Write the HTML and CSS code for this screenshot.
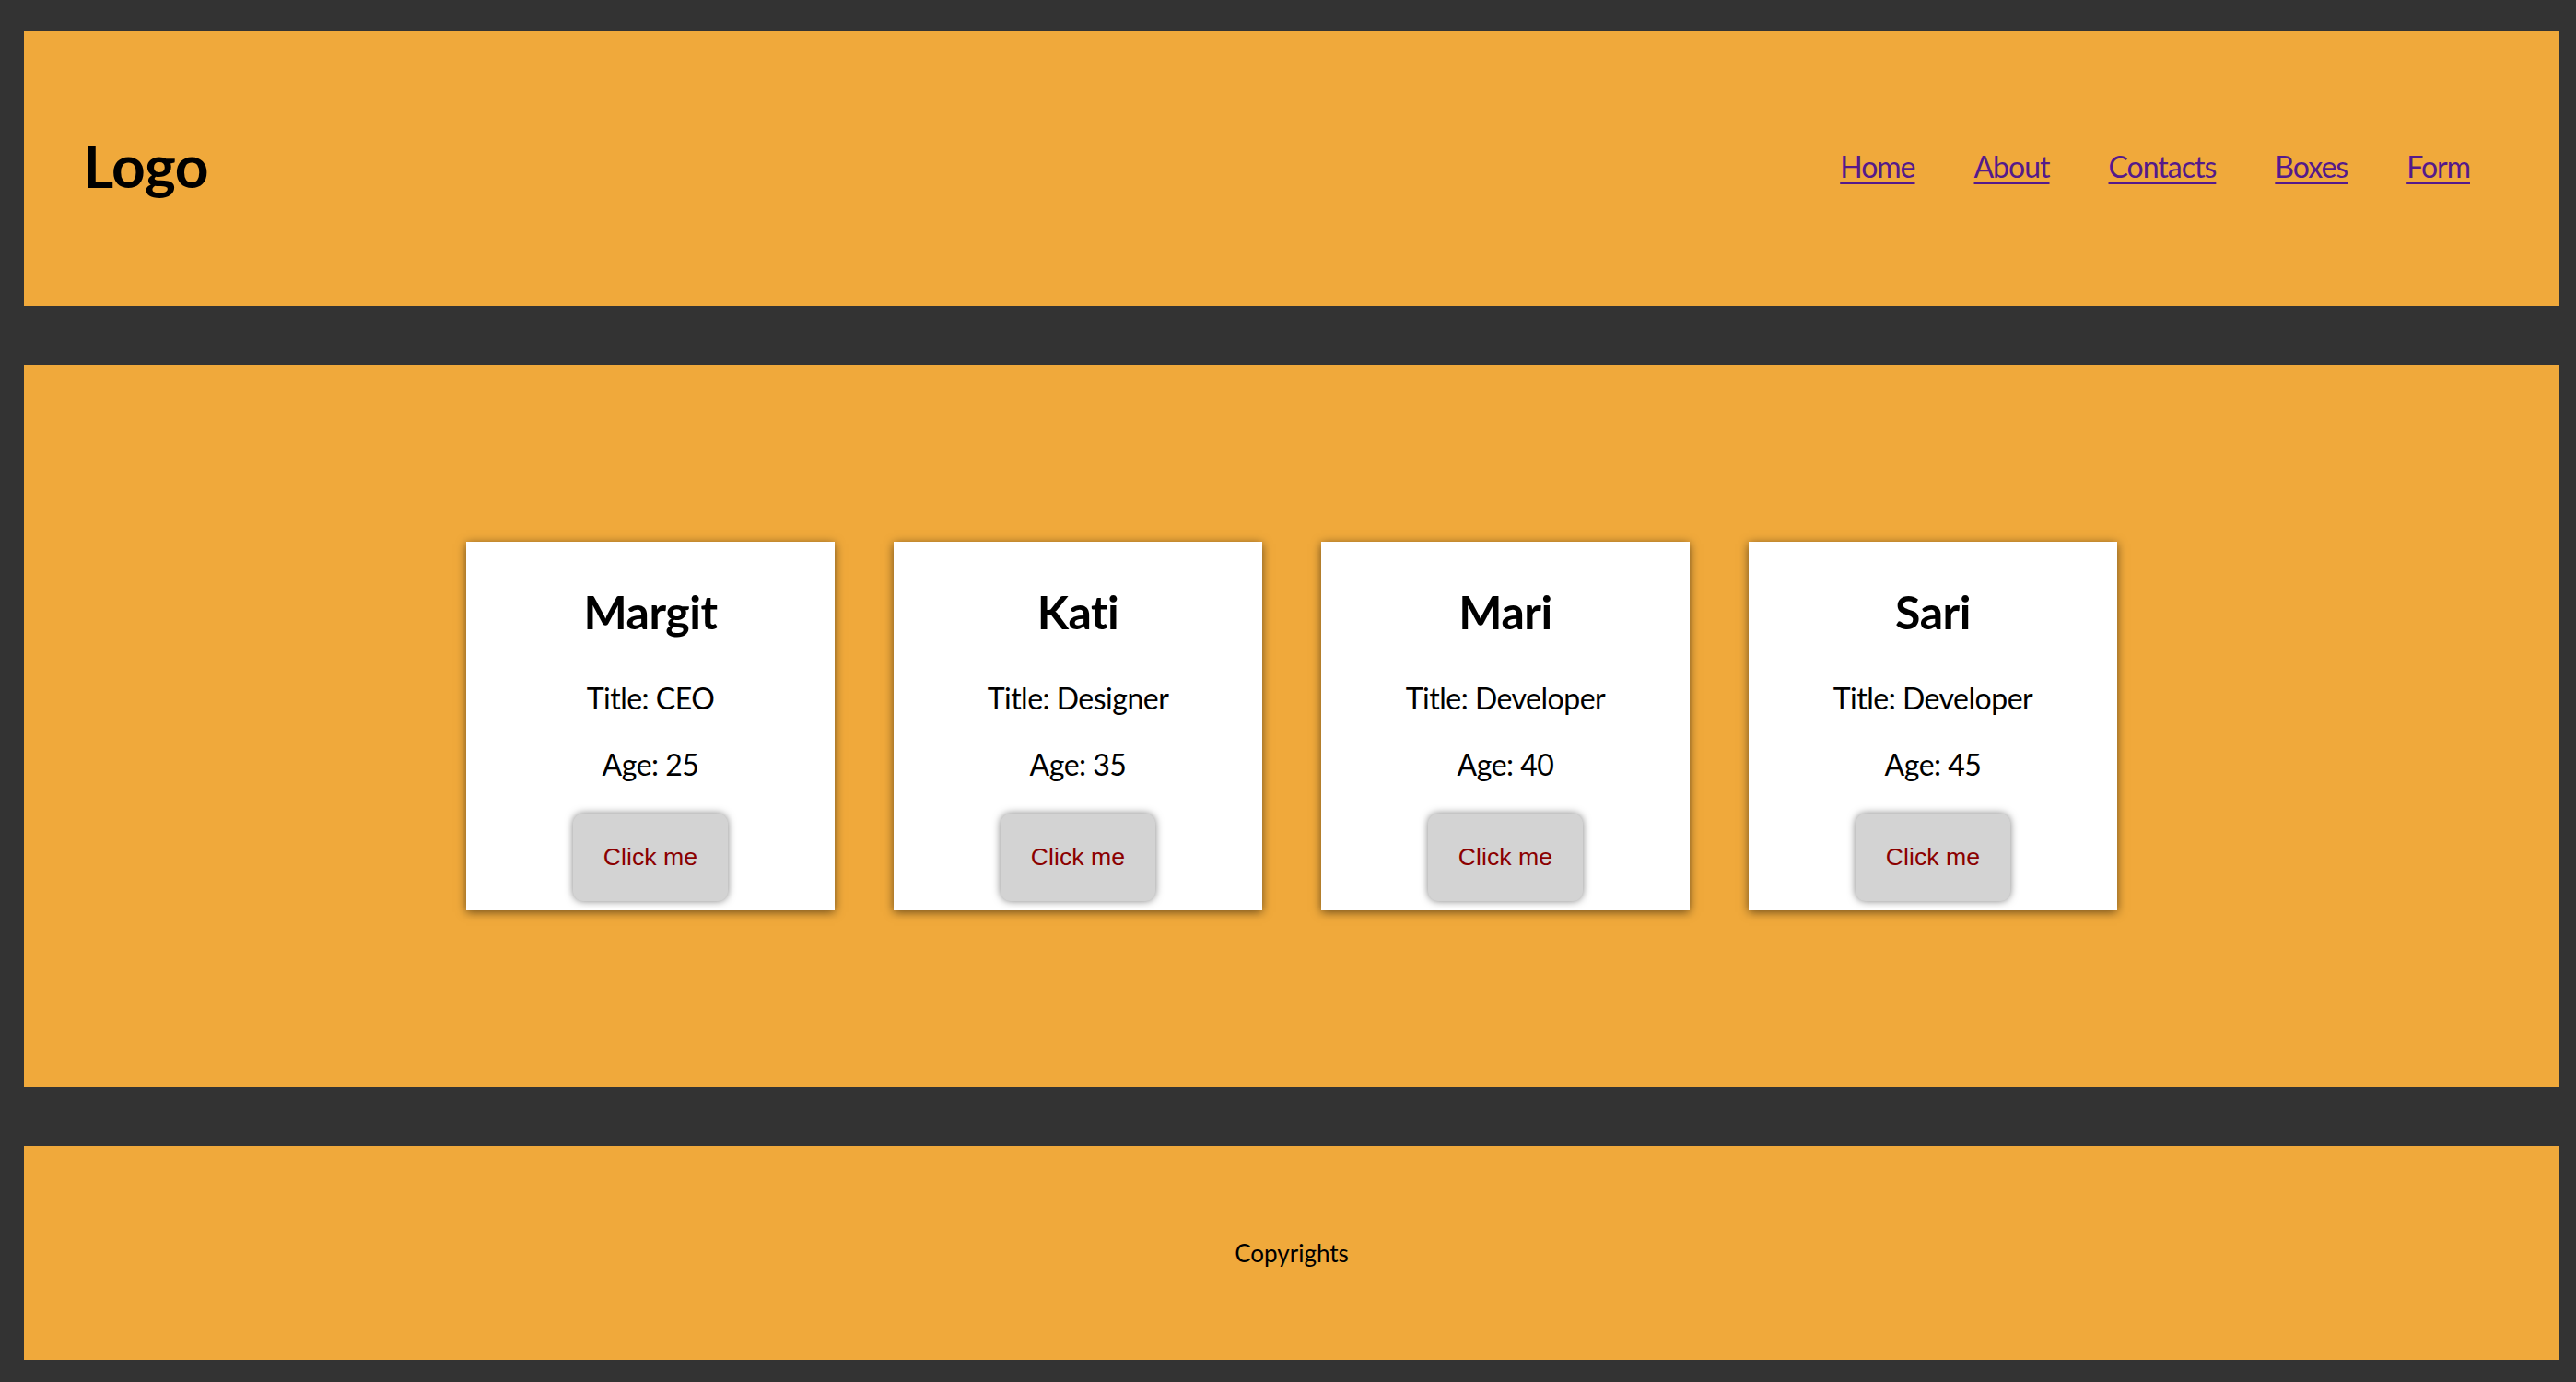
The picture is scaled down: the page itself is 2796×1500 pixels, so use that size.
FILE: index.html
```html
<!DOCTYPE html>
<html lang="en">
<head>
<meta charset="utf-8">
<title>Boxes</title>
<link rel="stylesheet" href="styles.css">
</head>
<body>
<div class="page">
  <header class="site-header">
    <div class="logo">Logo</div>
    <nav class="nav">
      <a href="#home">Home</a>
      <a href="#about">About</a>
      <a href="#contacts">Contacts</a>
      <a href="#boxes">Boxes</a>
      <a href="#form">Form</a>
    </nav>
  </header>
  <main class="content">
    <div class="card">
      <h2 class="card-name">Margit</h2>
      <p class="card-line">Title: CEO</p>
      <p class="card-line card-age">Age: 25</p>
      <button class="card-btn" type="button">Click me</button>
    </div>
    <div class="card">
      <h2 class="card-name">Kati</h2>
      <p class="card-line">Title: Designer</p>
      <p class="card-line card-age">Age: 35</p>
      <button class="card-btn" type="button">Click me</button>
    </div>
    <div class="card">
      <h2 class="card-name">Mari</h2>
      <p class="card-line">Title: Developer</p>
      <p class="card-line card-age">Age: 40</p>
      <button class="card-btn" type="button">Click me</button>
    </div>
    <div class="card">
      <h2 class="card-name">Sari</h2>
      <p class="card-line">Title: Developer</p>
      <p class="card-line card-age">Age: 45</p>
      <button class="card-btn" type="button">Click me</button>
    </div>
  </main>
  <footer class="site-footer">
    <p class="copy">Copyrights</p>
  </footer>
</div>
</body>
</html>
```

FILE: styles.css
```css
* { box-sizing: border-box; }

html, body {
  margin: 0;
  padding: 0;
  background: #333333;
}

body {
  font-family: Lato, "Noto Sans", sans-serif;
  font-variant-ligatures: none;
  color: #000;
}

.page {
  display: flex;
  flex-direction: column;
  gap: 64px;
  padding: 34px 18px 24px 26px;
  height: 1500px;
}

.site-header {
  height: 298px;
  background: #f0a93b;
  display: flex;
  align-items: center;
  justify-content: space-between;
  padding: 0 97px 6px 64px;
}

.logo {
  font-size: 64px;
  font-weight: 700;
  line-height: 1;
  letter-spacing: -0.5px;
}

.nav {
  display: flex;
  gap: 64px;
  font-size: 32px;
  letter-spacing: -1px;
}

.nav a {
  color: #551a8b;
  text-decoration: underline;
  text-underline-offset: 4px;
}

.content {
  height: 784px;
  background: #f0a93b;
  display: flex;
  align-items: center;
  justify-content: center;
  gap: 64px;
}

.card {
  width: 400px;
  height: 400px;
  background: #fff;
  box-shadow: 0 2px 10px rgba(0, 0, 0, 0.55);
  display: flex;
  flex-direction: column;
  align-items: center;
  padding-top: 46px;
  text-align: center;
}

.card-name {
  margin: 0;
  font-size: 50px;
  line-height: 60px;
  font-weight: 700;
  letter-spacing: -0.5px;
}

.card-line {
  margin: 44px 0 0;
  font-size: 32px;
  line-height: 40px;
  letter-spacing: -0.5px;
}

.card-age {
  margin-top: 32px;
}

.card-btn {
  margin-top: 33px;
  width: 168px;
  height: 95px;
  border: none;
  border-radius: 11px;
  background: #d3d3d3;
  color: #8b0000;
  font-family: "Liberation Sans", Arial, sans-serif;
  font-size: 26.7px;
  box-shadow: 0 0 8px rgba(0, 0, 0, 0.5);
  padding: 0;
}

.site-footer {
  height: 232px;
  background: #f0a93b;
  display: flex;
  align-items: center;
  justify-content: center;
}

.copy {
  margin: 0;
  font-size: 26px;
}
```
